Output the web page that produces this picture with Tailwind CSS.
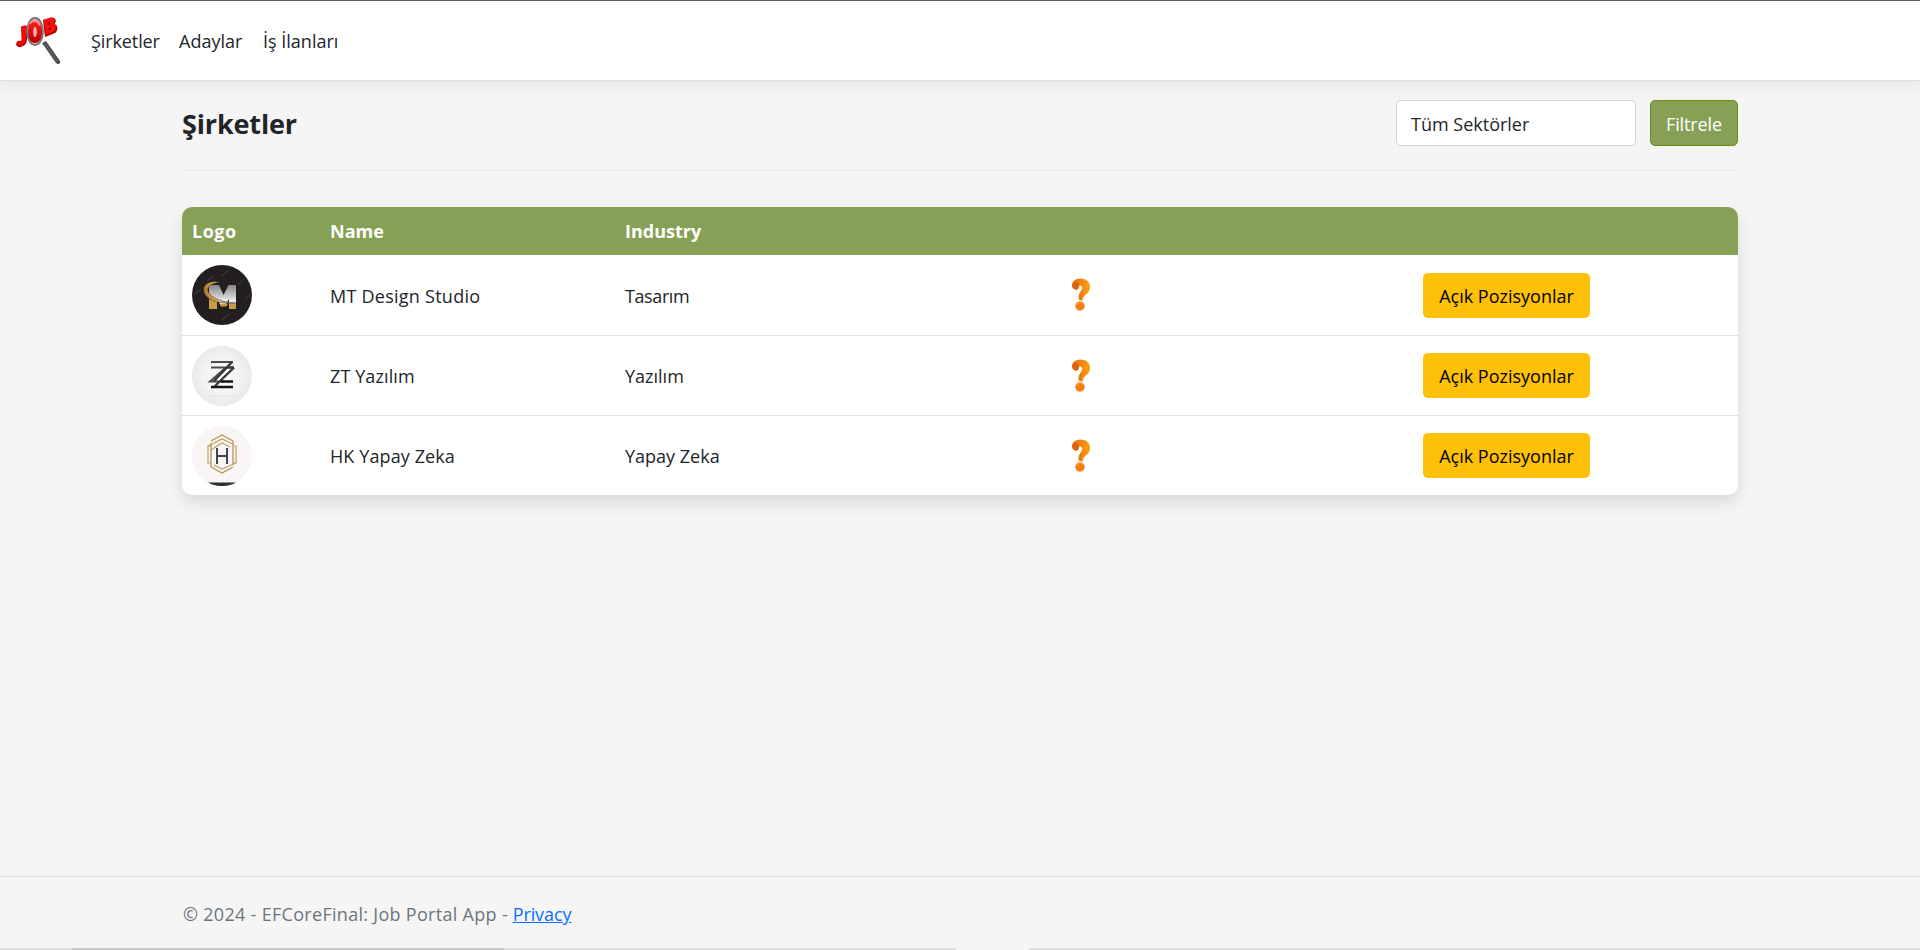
<!DOCTYPE html>
<html lang="tr">
<head>
<meta charset="utf-8">
<title>Şirketler</title>
<script src="https://cdn.jsdelivr.net/npm/@tailwindcss/browser@4"></script>
</head>
<body class="flex h-[950px] flex-col overflow-hidden bg-[#f5f5f5] font-['Open_Sans','Noto_Sans',sans-serif] text-[18px] leading-[27px] text-[#212529]">
<svg class="absolute size-0" aria-hidden="true">
  <defs>
    <linearGradient id="silver" x1="0" y1="0" x2="0" y2="1"><stop offset="0" stop-color="#858585"/><stop offset=".5" stop-color="#d0d0d0"/><stop offset=".65" stop-color="#eee"/></linearGradient>
    <linearGradient id="gold" x1="0" y1="0" x2="1" y2="0"><stop offset="0" stop-color="#a9772b"/><stop offset=".5" stop-color="#e5c06c"/><stop offset="1" stop-color="#b1843b"/></linearGradient>
    <radialGradient id="pearl"><stop offset="0" stop-color="#fafafa"/><stop offset=".6" stop-color="#f3f3f4"/><stop offset="1" stop-color="#e9eaec"/></radialGradient>
    <linearGradient id="orange" x1="0" y1="0" x2="1" y2="0"><stop offset="0" stop-color="#e86c0c"/><stop offset="1" stop-color="#ffa012"/></linearGradient>
    <symbol id="question" viewBox="0 0 20 34">
      <path d="M1 8C.5 3.500 4.500 .5 9.500 .5c6 0 9.500 3.500 9.500 8.500 0 5.500-4 7-6 9.500-1.300 1.600-1.200 2.500-1.400 4L8 22c-1-3-.5-6 1.500-8.500 1.700-2.300 2.500-4 1-5.500-1.200-1-2.500-.5-2.500.8 0 2-1.500 3.200-3.300 2.900C2.500 11.300 1.300 9.800 1 8z" fill="url(#orange)"/>
      <path d="M2.500 5C5 3 8 4 8 6.500c0 3-1.500 5-3.500 5-3.500-1-4-4.500-2-6.500z" fill="#dc640d"/>
      <path d="M8 21c-.5-4 2-6 3.800-8.500-.5 3-1.300 5-1 9.500z" fill="#e8780c"/>
      <circle cx="9" cy="28" r="4.700" fill="#f87f0f"/>
      <path d="M5.500 27c.8-2.400 3.500-3.500 6-2" fill="none" stroke="#ff9d2c" stroke-width="1.300"/>
    </symbol>
  </defs>
</svg>

<header class="h-[81px] shrink-0 border-t border-b border-t-[#606060] border-b-[#dee2e6] bg-white shadow-[0_8px_16px_rgba(0,0,0,0.05)]">
  <nav class="flex h-full items-center pl-[14px]">
    <a class="block h-[54px] w-[50px]">
      <svg viewBox="0 0 50 54" class="h-[54px] w-[50px]">
        <defs><linearGradient id="red" x1="0" y1="0" x2="0" y2="1"><stop offset="0" stop-color="#ff2020"/><stop offset="1" stop-color="#b60000"/></linearGradient></defs>
        <path d="M28 29l4-2 14 20c1 3-2 4-4 2z" fill="#4c4c4c"/>
        <path d="M31 30l12 17" stroke="#6c6c6c" stroke-width="1" fill="none"/>
        <path d="M7 13l6-1v13c0 6-4 8-8 8-3 0-4-4-1-6 2-1 3 1 4-1z" fill="#c10000"/>
        <path d="M7.500 12l4.500-.8v13.300c0 4-3 6-6.500 6.500-2 0-2.500-2.500-.5-3 2 0 2.500-1 2.500-3z" fill="#ee0c0c"/>
        <path d="M29 6l8-2.500c5-.5 6 4 3.500 6.500 4 1 4 8-.5 9.500L31 23z" fill="#bd0000"/>
        <path d="M30 5.500l6-1.500c5-1 5.500 4 3 6 4 1 3.500 6.500-.5 8L32 20.500z" fill="#f41212"/>
        <path d="M33.500 8.500l2.500-.7v2.500l-2 .6zM34.500 14l2.500-.7v2.500l-2 .6z" fill="#a70000"/>
        <ellipse cx="21" cy="17.500" rx="8" ry="13.500" fill="#f0b5b5" stroke="#777" stroke-width="1.800"/>
        <path d="M20.500 6.500c5-.5 7.500 5 7.500 11s-2 11.500-7 11.500-7-5-7-11 2-11 6.500-11.500z" fill="url(#red)"/>
        <ellipse cx="21" cy="18" rx="1.800" ry="5" fill="#f8b1b1"/>
        <path d="M16 9.500c3-4 8-3 10 2" fill="none" stroke="#ff8f8f" stroke-width="2"/>
      </svg>
    </a>
    <div class="flex gap-[19px] pt-px pl-[27px]">
      <a class="w-[69px] whitespace-nowrap tracking-[-0.1px]">Şirketler</a>
      <a class="w-[65px] whitespace-nowrap">Adaylar</a>
      <a class="whitespace-nowrap">İş İlanları</a>
    </div>
  </nav>
</header>

<main class="mx-auto w-[1556px] grow pt-[19px]">
  <div class="flex h-[46px] items-center justify-between">
    <h1 class="pt-px text-[27px] leading-8 font-bold tracking-[-0.150px]">Şirketler</h1>
    <form class="flex gap-[14px]">
      <div class="flex h-[46px] w-60 items-center rounded-[5px] border border-[#ced4da] bg-white pt-[2px] pl-[14px]">Tüm Sektörler</div>
      <button type="button" class="h-[46px] w-[88px] rounded-[5px] border border-[#6b8e0f] bg-[#86a055] pt-[2px] tracking-[-0.1px] text-white">Filtrele</button>
    </form>
  </div>
  <hr class="mt-6 border-[#e8e8e8]">
  <div class="mt-9 overflow-hidden rounded-[10px] bg-white shadow-[0_8px_16px_rgba(0,0,0,0.11)]">
    <div class="grid h-12 grid-cols-[138px_295px_347px_1fr] items-center bg-[#86a055] pl-[10px] font-bold text-white">
      <span class="tracking-[0.5px]">Logo</span><span>Name</span><span>Industry</span><span></span>
    </div>
    <div class="grid h-[81px] grid-cols-[138px_295px_444px_352px_1fr] items-center border-b border-[#dee2e6] pl-[10px]">
      <svg viewBox="0 0 60 60" class="size-[60px]">
        <circle cx="30" cy="30" r="30" fill="#231f20"/>
        <path d="M30 11l7-6M46 20l6-6M15 16l7-5M3 29l6-5M30 55l7-6M53 34l6-5" stroke="#484445" stroke-width="1"/>
        <path d="M19 20h8l4.500 10 5-10H44v24h-7V34l-4 7h-4l-4-7v10h-8V20z" fill="url(#silver)"/>
        <path d="M17 33l8 4v7h-8zM28 39l8 0-2 2.500h-5zM37 39h7v5h-7z" fill="#c89c49"/>
        <path d="M28 17c-8-2-17 1-16.500 8C12 34 26 40 46 38c-14 0-28-5-30-12-1-5 5-8 12-9z" fill="url(#gold)" stroke="#231f20" stroke-width=".5"/>
      </svg>
      <span class="pt-[2px] tracking-[0.25px]">MT Design Studio</span><span class="pt-[2px] tracking-[-0.4px]">Tasarım</span>
      <svg class="ml-[2px] h-[34px] w-5"><use href="#question"/></svg>
      <button type="button" class="ml-[2px] h-[45px] w-[167px] rounded-[5px] bg-[#ffc107] pt-[2px] whitespace-nowrap text-black">Açık Pozisyonlar</button>
    </div>
    <div class="grid h-20 grid-cols-[138px_295px_444px_352px_1fr] items-center border-b border-[#dee2e6] pl-[10px]">
      <svg viewBox="0 0 60 60" class="size-[60px]">
        <circle cx="30" cy="30" r="30" fill="url(#pearl)"/>
        <path d="M19 16h22M19 21.500h15L18 35.500h14" fill="none" stroke="#4c4c4c" stroke-width="2"/>
        <path d="M40 16L22 35M42 21.500h-7M42 21.500L23 40" fill="none" stroke="#383838" stroke-width="2.400"/>
        <path d="M29 35.500h12M19 41h22" stroke="#151515" stroke-width="2.600"/>
        <path d="M16 50h29" stroke="#e2e2e2"/>
      </svg>
      <span class="pt-px tracking-[0.1px]">ZT Yazılım</span><span class="pt-px">Yazılım</span>
      <svg class="ml-[2px] h-[34px] w-5"><use href="#question"/></svg>
      <button type="button" class="ml-[2px] h-[45px] w-[167px] rounded-[5px] bg-[#ffc107] pt-[2px] whitespace-nowrap text-black">Açık Pozisyonlar</button>
    </div>
    <div class="grid h-[79px] grid-cols-[138px_295px_444px_352px_1fr] items-center pl-[10px]">
      <svg viewBox="0 0 60 60" class="size-[60px]">
        <circle cx="30" cy="30" r="30" fill="#f9f5f4"/>
        <path d="M16 56.500h28C36 61.200 24 61.200 16 56.500z" fill="#303030"/>
        <path d="M19 15l11-6 11 6M41 41l-11 6-11-6M19 17v24M41 15v24" fill="none" stroke="#b39450" stroke-width="1.300"/>
        <path d="M19 20h-3v17h3M41 20h3v17h-3M16 20l14-7 11 5M19 24l11-7 8 4M22 39l8 4 14-6" fill="none" stroke="#bda265" stroke-width="1.200"/>
        <path d="M25 22v16M35 22v16M25 30h10" fill="none" stroke="#414650" stroke-width="2"/>
      </svg>
      <span class="pt-px tracking-[0.1px]">HK Yapay Zeka</span><span class="pt-px">Yapay Zeka</span>
      <svg class="ml-[2px] h-[34px] w-5"><use href="#question"/></svg>
      <button type="button" class="ml-[2px] h-[45px] w-[167px] rounded-[5px] bg-[#ffc107] pt-[2px] whitespace-nowrap text-black">Açık Pozisyonlar</button>
    </div>
  </div>
</main>

<footer class="flex h-[74px] shrink-0 flex-col border-t border-[#dee2e6]">
  <p class="mx-auto w-[1556px] pt-[24px] pl-px text-[#6c757d]"><span class="tracking-[0.3px]">© 2024 - EFCoreFinal: Job Portal App -</span> <a class="tracking-[-0.1px] text-[#0d6efd] underline">Privacy</a></p>
  <div class="mt-auto flex h-[2px]">
    <div class="w-[72px] bg-[#e0e0e0]"></div><div class="w-[432px] bg-[#c9c9c9]"></div><div class="w-[452px] bg-[#e0e0e0]"></div><div class="w-[73px] bg-[#f4f4f4]"></div><div class="grow bg-[#e0e0e0]"></div>
  </div>
</footer>
</body>
</html>
